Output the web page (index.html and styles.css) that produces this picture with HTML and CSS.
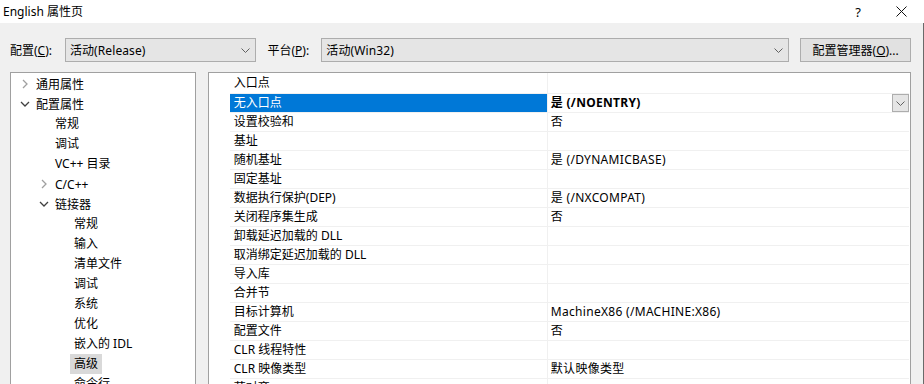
FILE: index.html
```html
<!DOCTYPE html>
<html lang="zh-CN">
<head>
    <meta charset="UTF-8">
    <title>English 属性页</title>
    <link rel="stylesheet" href="styles.css">
</head>
<body>
    <div class="titlebar">
        <span class="title">English 属性页</span>
        <span class="help">?</span>
        <svg class="close" width="11" height="11" viewBox="0 0 11 11"><path d="M0.5 0.5 L10.5 10.5 M10.5 0.5 L0.5 10.5" stroke="#111" stroke-width="1" fill="none"/></svg>
    </div>

    <div class="dialog">
        <!-- config / platform selectors -->
        <div class="toolbar">
            <span class="label">配置(<u>C</u>):</span>
            <div class="combo combo-config">
                <span>活动(Release)</span>
                <svg width="9" height="5" viewBox="0 0 9 5"><path d="M0.5 0.5 L4.5 4.5 L8.5 0.5" stroke="#606060" fill="none"/></svg>
            </div>
            <span class="label label-platform">平台(<u>P</u>):</span>
            <div class="combo combo-platform">
                <span>活动(Win32)</span>
                <svg width="9" height="5" viewBox="0 0 9 5"><path d="M0.5 0.5 L4.5 4.5 L8.5 0.5" stroke="#606060" fill="none"/></svg>
            </div>
            <button class="btn">配置管理器(<u>O</u>)...</button>
        </div>

        <div class="panes">
            <!-- tree of property pages -->
            <div class="tree">
                <div class="node lv1"><svg class="chev" width="10" height="10" viewBox="0 0 10 10"><path d="M3 1 L7 5 L3 9" stroke="#a0a0a0" stroke-width="1.3" fill="none"/></svg>通用属性</div>
                <div class="node lv1"><svg class="chev" width="10" height="10" viewBox="0 0 10 10"><path d="M1 3 L5 7 L9 3" stroke="#404040" stroke-width="1.3" fill="none"/></svg>配置属性</div>
                <div class="node lv2"><span class="leaf">常规</span></div>
                <div class="node lv2"><span class="leaf">调试</span></div>
                <div class="node lv2"><span class="leaf">VC++ 目录</span></div>
                <div class="node lv2"><svg class="chev" width="10" height="10" viewBox="0 0 10 10"><path d="M3 1 L7 5 L3 9" stroke="#a0a0a0" stroke-width="1.3" fill="none"/></svg>C/C++</div>
                <div class="node lv2"><svg class="chev" width="10" height="10" viewBox="0 0 10 10"><path d="M1 3 L5 7 L9 3" stroke="#404040" stroke-width="1.3" fill="none"/></svg>链接器</div>
                <div class="node lv3"><span class="leaf">常规</span></div>
                <div class="node lv3"><span class="leaf">输入</span></div>
                <div class="node lv3"><span class="leaf">清单文件</span></div>
                <div class="node lv3"><span class="leaf">调试</span></div>
                <div class="node lv3"><span class="leaf">系统</span></div>
                <div class="node lv3"><span class="leaf">优化</span></div>
                <div class="node lv3"><span class="leaf">嵌入的 IDL</span></div>
                <div class="node lv3"><span class="leaf selected">高级</span></div>
                <div class="node lv3"><span class="leaf">命令行</span></div>
            </div>

            <!-- property grid -->
            <div class="grid">
                <div class="row first"><div class="name">入口点</div><div class="value"></div></div>
                <div class="row active"><div class="name">无入口点</div><div class="value"><b>是 (/NOENTRY)</b><span class="drop"><svg width="9" height="5" viewBox="0 0 9 5"><path d="M0.5 0.5 L4.5 4.5 L8.5 0.5" stroke="#606060" fill="none"/></svg></span></div></div>
                <div class="row"><div class="name">设置校验和</div><div class="value">否</div></div>
                <div class="row"><div class="name">基址</div><div class="value"></div></div>
                <div class="row"><div class="name">随机基址</div><div class="value">是 (/DYNAMICBASE)</div></div>
                <div class="row"><div class="name">固定基址</div><div class="value"></div></div>
                <div class="row"><div class="name">数据执行保护(DEP)</div><div class="value">是 (/NXCOMPAT)</div></div>
                <div class="row"><div class="name">关闭程序集生成</div><div class="value">否</div></div>
                <div class="row"><div class="name">卸载延迟加载的 DLL</div><div class="value"></div></div>
                <div class="row"><div class="name">取消绑定延迟加载的 DLL</div><div class="value"></div></div>
                <div class="row"><div class="name">导入库</div><div class="value"></div></div>
                <div class="row"><div class="name">合并节</div><div class="value"></div></div>
                <div class="row"><div class="name">目标计算机</div><div class="value">MachineX86 (/MACHINE:X86)</div></div>
                <div class="row"><div class="name">配置文件</div><div class="value">否</div></div>
                <div class="row"><div class="name">CLR 线程特性</div><div class="value"></div></div>
                <div class="row"><div class="name">CLR 映像类型</div><div class="value">默认映像类型</div></div>
                <div class="row"><div class="name">节对齐</div><div class="value"></div></div>
            </div>
        </div>
    </div>
</body>
</html>
```

FILE: styles.css
```css
* {
    margin: 0;
    padding: 0;
    box-sizing: border-box;
}

body {
    width: 924px;
    height: 384px;
    overflow: hidden;
    font-family: "Noto Sans", "Noto Sans CJK SC", sans-serif;
    font-size: 12px;
    color: #000;
    background: #f0f0f0;
}

/* window title */
.titlebar {
    height: 23px;
    background: #fff;
    display: flex;
    align-items: center;
    padding-left: 3px;
}

.titlebar .title {
    flex: 1;
    line-height: 16px;
}

.titlebar .help {
    margin-right: 35px;
    font-size: 13px;
}

.titlebar .close {
    margin-right: 17px;
}

.dialog {
    height: 361px;
    border-right: 1px solid #6a6a6a;
    padding: 15px 12px 0 10px;
}

/* selectors row */
.toolbar {
    display: flex;
    align-items: center;
    height: 24px;
}

.label {
    width: 55px;
}

.label-platform {
    width: 54px;
    margin-left: 11px;
}

.combo {
    height: 24px;
    background: #e5e5e5;
    border: 1px solid #adadad;
    display: flex;
    align-items: center;
    justify-content: space-between;
    padding: 0 5px 0 4px;
    letter-spacing: 0.1px;
}

.combo-config {
    width: 192px;
}

.combo-platform {
    width: 469px;
}

.btn {
    margin-left: 11px;
    width: 111px;
    height: 24px;
    font: inherit;
    background: #e1e1e1;
    border: 1px solid #adadad;
}

/* lower panes */
.panes {
    display: flex;
    margin-top: 10px;
    gap: 12px;
}

.tree {
    width: 186px;
    height: 320px;
    background: #fff;
    border: 1px solid #a0a0a0;
    border-bottom: none;
    padding-top: 1px;
}

.node {
    height: 20px;
    display: flex;
    align-items: center;
    white-space: nowrap;
}

.node .chev {
    margin-right: 6px;
}

.lv1 { padding-left: 9px; }
.lv2 { padding-left: 28px; }
.lv3 { padding-left: 47px; }

.leaf {
    margin-left: 16px;
    line-height: 20px;
}

.leaf.selected {
    background: #d9d9d9;
    margin-left: 12px;
    padding: 0 4px;
}

.grid {
    width: 704px;
    height: 320px;
    background: #fff;
    border: 1px solid #a0a0a0;
    border-bottom: none;
    padding-left: 21px;
    padding-right: 1px;
}

.row {
    display: flex;
    height: 19px;
    border-bottom: 1px solid #f0f0f0;
}

.row.first {
    height: 21px;
}

.row .name {
    width: 318px;
    padding-left: 4px;
    line-height: 18px;
    white-space: nowrap;
    border-right: 1px solid #f0f0f0;
    display: flex;
    align-items: center;
}

.row .value {
    flex: 1;
    padding-left: 3px;
    line-height: 18px;
    white-space: nowrap;
    display: flex;
    align-items: center;
    letter-spacing: 0.3px;
}

.row.active .name {
    background: #0078d7;
    color: #fff;
}

.row .value b {
    flex: 1;
}

.drop {
    width: 17px;
    height: 18px;
    background: #e5e5e5;
    border: 1px solid #adadad;
    display: flex;
    align-items: center;
    justify-content: center;
}
```
